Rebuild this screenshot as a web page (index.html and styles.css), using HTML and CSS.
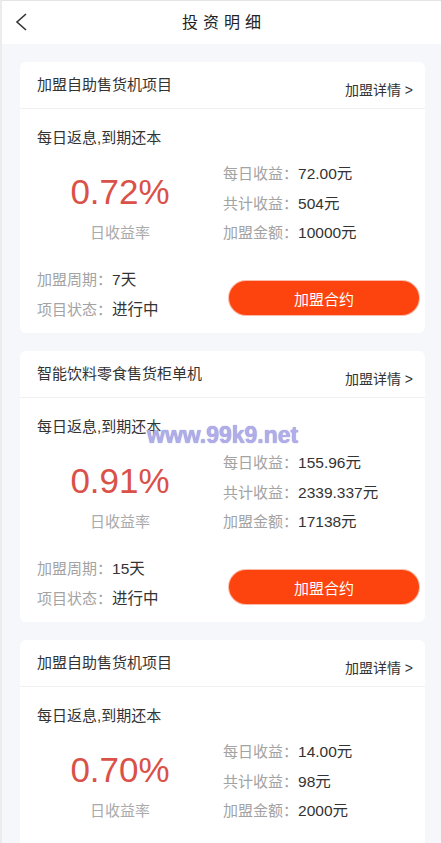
FILE: index.html
```html
<!DOCTYPE html>
<html lang="zh-CN">
<head>
<meta charset="utf-8">
<title>投资明细</title>
<link rel="stylesheet" href="styles.css">
</head>
<body>
<div class="page">
  <header class="topbar">
    <svg class="back" width="14" height="20" viewBox="0 0 14 20"><polyline points="11,2 2,10 11,18" fill="none" stroke="#333" stroke-width="1.6"/></svg>
    <h1 class="topbar-title">投资明细</h1>
  </header>

  <main class="list">
    <section class="card">
      <div class="card-head"><span class="card-title">加盟自助售货机项目</span><span class="more">加盟详情 &gt;</span></div>
      <div class="card-body">
        <div class="desc">每日返息,到期还本</div>
        <div class="stats">
          <div class="rate"><div class="rate-num">0.72%</div><div class="rate-label">日收益率</div></div>
          <div class="kv">
            <div class="row"><span class="k">每日收益：</span><span class="v">72.00元</span></div>
            <div class="row"><span class="k">共计收益：</span><span class="v">504元</span></div>
            <div class="row"><span class="k">加盟金额：</span><span class="v">10000元</span></div>
          </div>
        </div>
        <div class="foot">
          <div class="info">
            <div class="row"><span class="k">加盟周期：</span><span class="v">7天</span></div>
            <div class="row"><span class="k">项目状态：</span><span class="v">进行中</span></div>
          </div>
          <button class="btn">加盟合约</button>
        </div>
      </div>
    </section>

    <section class="card">
      <div class="card-head"><span class="card-title">智能饮料零食售货柜单机</span><span class="more">加盟详情 &gt;</span></div>
      <div class="card-body">
        <div class="desc">每日返息,到期还本</div>
        <div class="stats">
          <div class="rate"><div class="rate-num">0.91%</div><div class="rate-label">日收益率</div></div>
          <div class="kv">
            <div class="row"><span class="k">每日收益：</span><span class="v">155.96元</span></div>
            <div class="row"><span class="k">共计收益：</span><span class="v">2339.337元</span></div>
            <div class="row"><span class="k">加盟金额：</span><span class="v">17138元</span></div>
          </div>
        </div>
        <div class="foot">
          <div class="info">
            <div class="row"><span class="k">加盟周期：</span><span class="v">15天</span></div>
            <div class="row"><span class="k">项目状态：</span><span class="v">进行中</span></div>
          </div>
          <button class="btn">加盟合约</button>
        </div>
      </div>
    </section>

    <section class="card">
      <div class="card-head"><span class="card-title">加盟自助售货机项目</span><span class="more">加盟详情 &gt;</span></div>
      <div class="card-body">
        <div class="desc">每日返息,到期还本</div>
        <div class="stats">
          <div class="rate"><div class="rate-num">0.70%</div><div class="rate-label">日收益率</div></div>
          <div class="kv">
            <div class="row"><span class="k">每日收益：</span><span class="v">14.00元</span></div>
            <div class="row"><span class="k">共计收益：</span><span class="v">98元</span></div>
            <div class="row"><span class="k">加盟金额：</span><span class="v">2000元</span></div>
          </div>
        </div>
        <div class="foot">
          <div class="info">
            <div class="row"><span class="k">加盟周期：</span><span class="v">7天</span></div>
            <div class="row"><span class="k">项目状态：</span><span class="v">进行中</span></div>
          </div>
          <button class="btn">加盟合约</button>
        </div>
      </div>
    </section>
  </main>

  <div class="watermark">www.99k9.net</div>
</div>
</body>
</html>
```

FILE: styles.css
```css
* { box-sizing: border-box; }
html, body { margin: 0; padding: 0; }
body {
  background: #f6f7fb;
  font-family: "Liberation Sans", "Noto Sans CJK SC", sans-serif;
  color: #333;
}
.page {
  position: relative;
  border-top: 1px solid #e4e4e4;
  border-left: 2px solid #ececec;
  min-height: 843px;
}
.topbar {
  height: 43px;
  background: #fff;
  display: flex;
  align-items: center;
  justify-content: center;
  position: relative;
}
.back {
  position: absolute;
  left: 13px;
  top: 11px;
}
.topbar-title {
  margin: 0;
  font-size: 16px;
  font-weight: normal;
  letter-spacing: 5px;
  padding-left: 5px;
  color: #222;
  line-height: 20px;
}
.list {
  padding: 18px 16px 0 18px;
  display: flex;
  flex-direction: column;
  gap: 18px;
}
.card {
  background: #fff;
  border-radius: 6px;
  height: 271px;
  overflow: hidden;
}
.card-head {
  height: 47px;
  border-bottom: 1px solid #f0f0f2;
  display: flex;
  justify-content: space-between;
  align-items: flex-start;
  padding: 0 12px 0 17px;
}
.card-title {
  font-size: 15px;
  line-height: 20px;
  padding-top: 13px;
  color: #333;
}
.more {
  font-size: 14px;
  line-height: 20px;
  padding-top: 18px;
  color: #333;
}
.card-body {
  padding: 0 6px 13px 17px;
}
.desc {
  margin-top: 19px;
  font-size: 15px;
  line-height: 20px;
  color: #333;
}
.stats {
  display: flex;
  margin-top: 15px;
}
.rate {
  width: 166px;
  text-align: center;
}
.rate-num {
  margin-top: 9px;
  font-size: 35px;
  line-height: 40px;
  color: #da5148;
}
.rate-label {
  margin-top: 11px;
  font-size: 15px;
  line-height: 20px;
  color: #aaa;
}
.kv {
  margin-left: 20px;
  display: flex;
  flex-direction: column;
  gap: 7.5px;
}
.row {
  font-size: 15px;
  line-height: 22px;
  white-space: nowrap;
}
.k { color: #a3a3a3; }
.v { color: #333; font-size: 15.5px; }
.foot {
  margin-top: 25px;
  display: flex;
  justify-content: space-between;
  align-items: flex-start;
}
.info {
  display: flex;
  flex-direction: column;
  gap: 8px;
}
.btn {
  margin-top: 12px;
  width: 190px;
  height: 34px;
  border: none;
  border-radius: 17px;
  background: #fd440e;
  box-shadow: 0 0 0 1px rgba(250, 140, 110, 0.6);
  color: #fff;
  font-family: "Liberation Sans", "Noto Sans CJK SC", sans-serif;
  font-size: 15px;
  padding: 0;
}
.watermark {
  position: absolute;
  left: 145px;
  top: 421px;
  font-size: 23px;
  font-weight: bold;
  line-height: 26px;
  color: #b0ade9;
  text-shadow: 0 0 1px #7f7bc6;
  font-family: "Liberation Sans", sans-serif;
}
```
